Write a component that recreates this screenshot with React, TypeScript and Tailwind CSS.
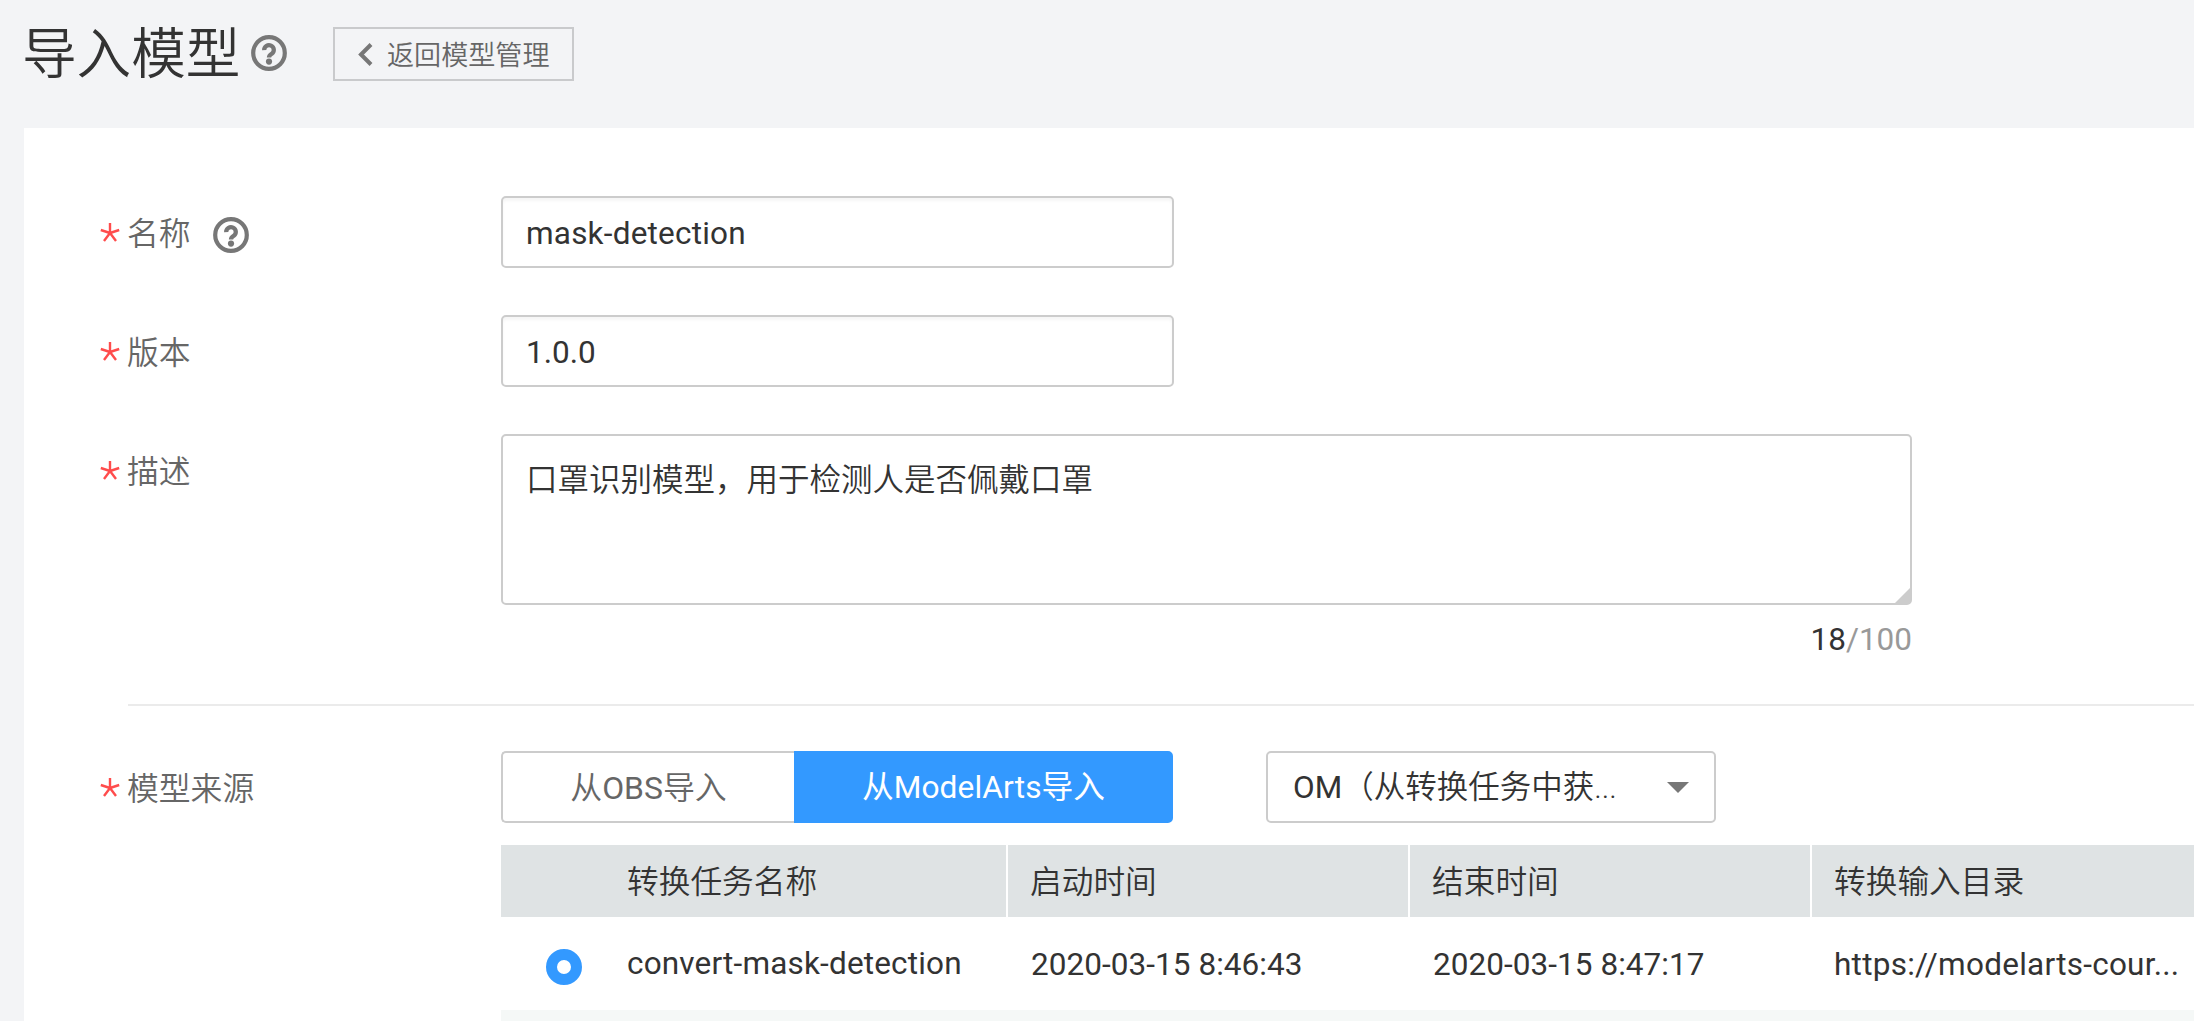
import type { ReactNode } from "react";

const CJK = "font-['Roboto','Noto_Sans_CJK_SC',sans-serif]";

function HelpIcon() {
  return (
    <svg className="size-9 shrink-0" viewBox="0 0 36 36" fill="none" stroke="#777">
      <circle cx="18" cy="18" r="15.8" strokeWidth="4.2" />
      <path d="M13.2 15.2a4.8 4.8 0 1 1 7.6 3.6c-1.9 1.3-2.8 1.9-2.8 3.6" strokeWidth="4.3" />
      <circle cx="18" cy="26.6" r="3.1" fill="#777" stroke="none" />
    </svg>
  );
}

function Star() {
  return (
    <svg className="mt-[13px] h-[19px] w-5 shrink-0" viewBox="0 0 20 19" stroke="#ff4c4c" strokeWidth="2.4">
      <path d="M10 10V0M10 10L0.8 7M10 10l9.2-3M10 10l-6 8M10 10l6 8" />
    </svg>
  );
}

function Field({ label, help, className, children }: { label: string; help?: boolean; className: string; children: ReactNode }) {
  return (
    <div className={"flex items-start " + className}>
      <div className="flex w-[401px] shrink-0 pt-[14px]">
        <Star />
        <span className="mt-[2px] ml-[7px] h-11 text-[31.8px] leading-[44px] font-[350] text-[#666]">{label}</span>
        {help && (
          <span className="mt-[7px] ml-[22px]">
            <HelpIcon />
          </span>
        )}
      </div>
      {children}
    </div>
  );
}

const headers = ["启动时间", "结束时间"];
const times = ["2020-03-15 8:46:43", "2020-03-15 8:47:17"];

export default function App() {
  return (
    <div className={"h-[1021px] w-[2194px] overflow-hidden bg-[#f3f4f6] font-normal text-[#333] " + CJK}>
      <header className="flex h-32 items-start pl-6">
        <h1 className="mt-[16px] -ml-0.5 h-[76px] w-[218px] text-[54.6px] leading-[76px] font-[350] whitespace-nowrap">导入模型</h1>
        <span className="mt-[35px] ml-[11px]">
          <HelpIcon />
        </span>
        <button className="mt-[27px] ml-[46px] flex h-[54px] w-[241px] items-center border-2 border-[#c9cacc] pl-[23px] text-[#666]">
          <svg className="h-[23px] w-[15px]" viewBox="0 0 15 23" fill="none" stroke="#777" strokeWidth="4">
            <path d="M13 1.5L3 11.5l10 10" />
          </svg>
          <span className="mt-[3px] ml-[14px] text-[27.1px] leading-[50px] font-[350] whitespace-nowrap">返回模型管理</span>
        </button>
      </header>

      <main className="ml-6 h-[893px] bg-white pt-[68px] pl-[76px]">
        <Field label="名称" help className="h-[119px]">
          <div className="h-[72px] w-[673px] rounded-[5px] border-2 border-[#ccc] pl-[23px] text-[31.5px] leading-[71px] tracking-[0.2px] shadow-[inset_0_3px_3px_rgba(0,0,0,0.04)]">
            mask-detection
          </div>
        </Field>
        <Field label="版本" className="h-[119px]">
          <div className="h-[72px] w-[673px] rounded-[5px] border-2 border-[#ccc] pl-[23px] text-[31.5px] leading-[71px] shadow-[inset_0_3px_3px_rgba(0,0,0,0.04)]">
            1.0.0
          </div>
        </Field>
        <Field label="描述" className="h-[270px]">
          <div className="w-[1411px]">
            <div className="relative h-[171px] rounded-[5px] border-2 border-[#ccc] pt-[23px] pl-[23px] text-[31.5px] leading-[44px] font-[350]">
              口罩识别模型，用于检测人是否佩戴口罩
              <svg className="absolute right-0 bottom-0 size-[15px]" viewBox="0 0 15 15" fill="#ccc">
                <path d="M15 0v15H0z" />
              </svg>
            </div>
            <div className="mt-[13px] text-right text-[31.5px] leading-[44px]">
              18<span className="text-[#999]">/100</span>
            </div>
          </div>
        </Field>
        <div className="ml-7 h-0.5 bg-[#ebebeb]" />

        <Field label="模型来源" className="mt-[45px] h-[72px]">
          <div className="flex text-[31.5px] leading-[68px]">
            <button className="h-[72px] w-[293px] rounded-l-[5px] border-2 border-r-0 border-[#ccc] pt-0.5 text-center text-[31.9px] leading-[66px] font-[350] text-[#666]">
              从<span className="font-normal">OBS</span>导入
            </button>
            <button className="h-[72px] w-[379px] rounded-r-[5px] border-2 border-[#39f] bg-[#39f] pt-0.5 text-center text-[31.7px] leading-[66px] font-normal text-white">
              从<span className="font-[450] tracking-[0.1px]">ModelArts</span>导入
            </button>
          </div>
          <div className="ml-[93px] flex h-[72px] w-[450px] items-center justify-between rounded-[5px] border-2 border-[#ccc] pr-[25px] pl-[25px] text-[31.5px] leading-[66px] font-[350] whitespace-nowrap">
            <span className="pt-0.5">
              <span className="font-normal">OM</span>（从转换任务中获...
            </span>
            <svg className="h-[11px] w-[22px]" viewBox="0 0 22 11" fill="#777">
              <path d="M0 0h22L11 11z" />
            </svg>
          </div>
        </Field>

        <div className="mt-[22px] ml-[401px] text-[31.5px] whitespace-nowrap">
          <div className="grid h-[72px] grid-cols-[505px_400px_400px_1fr] gap-x-0.5 text-[31.7px] leading-[76px] font-[350]">
            <div className="h-[72px] bg-[#dfe3e4] pl-[126px]">转换任务名称</div>
            {headers.map((h) => (
              <div key={h} className="h-[72px] bg-[#dfe3e4] pl-[22px]">
                {h}
              </div>
            ))}
            <div className="h-[72px] bg-[#dfe3e4] pl-[22px]">转换输入目录</div>
          </div>
          <div className="grid h-[93px] grid-cols-[505px_400px_400px_1fr] gap-x-0.5 leading-[95px] tracking-[0.12px]">
            <div className="flex h-[93px] items-center pl-[45px]">
              <span className="mt-1.5 size-9 rounded-full border-[11px] border-[#39f] bg-white" />
              <span className="ml-[45px] tracking-[0.17px]">convert-mask-detection</span>
            </div>
            {times.map((t) => (
              <div key={t} className="h-[93px] pl-[23px] tracking-[0.05px]">
                {t}
              </div>
            ))}
            <div className="h-[93px] pl-[22px] tracking-[0.25px]">https://modelarts-cour...</div>
          </div>
          <div className="h-[11px] bg-[#f5f8f7]" />
        </div>
      </main>
    </div>
  );
}
